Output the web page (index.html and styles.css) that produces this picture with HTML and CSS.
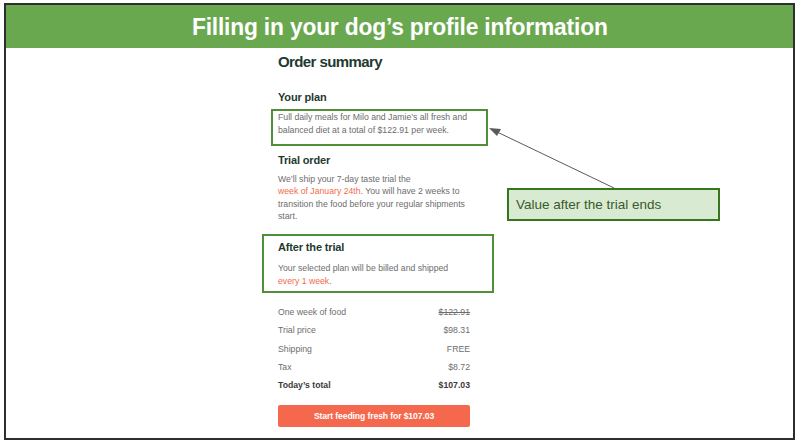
FILE: index.html
```html
<!DOCTYPE html>
<html>
<head>
<meta charset="utf-8">
<link rel="stylesheet" href="styles.css">
</head>
<body>
<div class="frame">
  <header class="banner"><h1 class="banner-title">Filling in your dog’s profile information</h1></header>
  <main class="summary">
    <h2 class="summary-title">Order summary</h2>
    <section class="block">
      <h3 class="block-title">Your plan</h3>
      <p class="copy mark mark-plan">Full daily meals for Milo and Jamie’s all fresh and<br>balanced diet at a total of $122.91 per week.</p>
    </section>
    <section class="block block-trial">
      <h3 class="block-title">Trial order</h3>
      <p class="copy copy-trial">We’ll ship your 7-day taste trial the<br><span class="accent">week of January 24th</span>. You will have 2 weeks to<br>transition the food before your regular shipments<br>start.</p>
    </section>
    <section class="mark mark-after">
      <h3 class="block-title">After the trial</h3>
      <p class="copy copy-after">Your selected plan will be billed and shipped<br><span class="accent">every 1 week</span>.</p>
    </section>
    <ul class="lines">
      <li class="line"><span>One week of food</span><s>$122.91</s></li>
      <li class="line"><span>Trial price</span><span>$98.31</span></li>
      <li class="line"><span>Shipping</span><span>FREE</span></li>
      <li class="line"><span>Tax</span><span>$8.72</span></li>
      <li class="line line-total"><span>Today’s total</span><span>$107.03</span></li>
    </ul>
    <button class="cta">Start feeding fresh for $107.03</button>
  </main>
  <svg class="pointer" width="787" height="433" viewBox="0 0 787 433">
    <line x1="608" y1="183" x2="489" y2="126" stroke="#5a5a5a" stroke-width="1"/>
    <polygon points="483,123 495,124 491,131" fill="#5a5a5a"/>
  </svg>
  <div class="callout">Value after the trial ends</div>
</div>
</body>
</html>
```
FILE: styles.css
```css
* { box-sizing: border-box; }
html, body { margin: 0; padding: 0; background: #ffffff; }
body { width: 800px; height: 443px; overflow: hidden; }

.frame {
  position: relative;
  margin: 3px 0 0 4px;
  width: 791px;
  height: 437px;
  border: 2px solid #2e2e2e;
  background: #ffffff;
}

.banner {
  height: 43px;
  background: #6aa84f;
  display: flex;
  align-items: center;
  justify-content: center;
}
.banner-title {
  margin: 0;
  color: #ffffff;
  font-family: "Liberation Sans", Arial, sans-serif;
  font-weight: 700;
  font-size: 24px;
  letter-spacing: -0.2px;
  transform: scaleX(0.95);
  white-space: nowrap;
}

.summary {
  margin-left: 272px;
  width: 192px;
  padding-top: 5px;
  font-family: "Liberation Sans", Arial, sans-serif;
  color: #6d6d6d;
}
.summary-title {
  margin: 0;
  font-size: 15px;
  line-height: 18px;
  font-weight: 700;
  color: #1f3a30;
  letter-spacing: -0.6px;
}
.block { margin-top: 19px; }
.block-trial { margin-top: 7px; }
.block-title {
  margin: 0;
  font-size: 11px;
  line-height: 14px;
  font-weight: 700;
  color: #1f3a30;
  letter-spacing: -0.15px;
}
.copy {
  margin: 0;
  font-size: 8.7px;
  line-height: 12.5px;
  white-space: nowrap;
}
.copy-trial { margin-top: 6px; line-height: 12.3px; }
.copy-after { margin-top: 8px; }
.accent { color: #f26b4d; }

.mark { border: 2px solid #4f8f35; }
.mark-plan {
  margin: 5px -18px 0 -7px;
  padding: 0 16px 8px 5px;
}
.mark-after {
  margin: 12px -24px 0 -16px;
  padding: 4px 22px 4px 14px;
}

.lines {
  list-style: none;
  margin: 10px 0 0;
  padding: 0;
}
.line {
  display: flex;
  justify-content: space-between;
  font-size: 8.7px;
  line-height: 18.3px;
}
.line s { text-decoration: line-through; }
.line-total { font-weight: 700; color: #3a3a3a; }

.cta {
  display: block;
  margin-top: 10px;
  width: 192px;
  height: 22px;
  border: 0;
  border-radius: 2px;
  background: #f4694e;
  color: #ffffff;
  font-family: "Liberation Sans", Arial, sans-serif;
  font-size: 8.6px;
  font-weight: 700;
  letter-spacing: -0.1px;
  padding: 0;
}

.pointer {
  position: absolute;
  left: 0;
  top: 0;
  pointer-events: none;
}
.callout {
  position: absolute;
  left: 501px;
  top: 183px;
  width: 213px;
  height: 33px;
  background: #d9ead3;
  border: 2px solid #38761d;
  color: #3a5a28;
  font-family: "Liberation Sans", Arial, sans-serif;
  font-size: 13.5px;
  line-height: 29px;
  padding-left: 7px;
}
```
